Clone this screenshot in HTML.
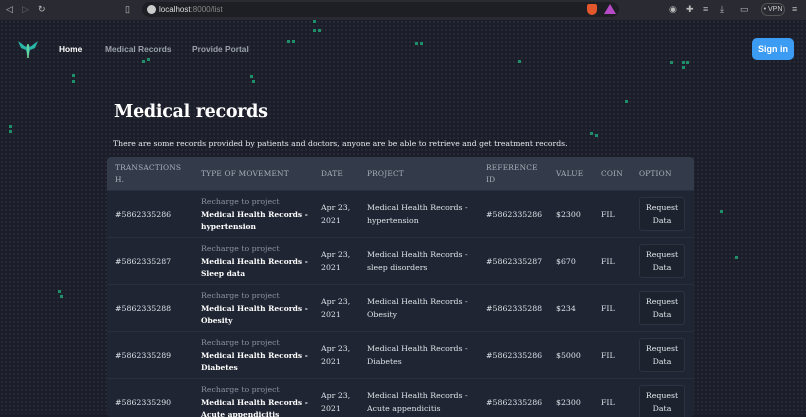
<!DOCTYPE html>
<html><head><meta charset="utf-8"><style>
*{margin:0;padding:0;box-sizing:border-box}
body{width:806px;height:414px;overflow:hidden;background:#1b1e28;font-family:"DejaVu Serif","Liberation Serif",serif;position:relative;color:#d8dce3}
.bg{position:absolute;left:0;top:20px;width:806px;height:394px;background-color:#1b1e29;background-image:radial-gradient(circle,#272b38 1px,transparent 1.3px);background-size:4px 4px}
.bar{position:absolute;left:0;top:0;width:806px;height:20px;background:#2a2b32;font-family:"Liberation Sans",sans-serif}
.url{position:absolute;left:142px;top:2px;width:477px;height:15px;background:#1e1f25;border-radius:8px;color:#ddd;font-size:8px;line-height:15px;padding-left:17px}
.url span{color:#888}
.ic{position:absolute;top:5px;width:9px;height:9px;color:#bbb;font-size:9px;line-height:9px}
.nav{position:absolute;top:44px;font-family:"Liberation Sans",sans-serif;font-size:8.4px;font-weight:bold;color:#9aa0aa}
.signin{position:absolute;left:752px;top:38px;width:42px;height:22px;background:#3c9bf2;border-radius:5px;color:#fff;font-family:"Liberation Sans",sans-serif;font-weight:bold;font-size:9px;line-height:22px;text-align:center}
h1{position:absolute;left:114px;top:102px;font-size:17.5px;font-weight:bold;color:#fff;letter-spacing:-0.3px}
.p{position:absolute;left:113px;top:139px;font-size:7.7px;color:#e6e8ec;white-space:nowrap}
.tbl{position:absolute;left:107px;top:157px;width:587px;height:260px;background:#1f2532;border-radius:4px;overflow:hidden}
.hd{position:absolute;left:0;top:0;width:587px;height:33px;background:#333b4a}
.h{position:absolute;font-size:7.4px;color:#a9b0bb;line-height:12px;letter-spacing:.2px}
.row{position:absolute;left:0;width:587px;height:47px;border-top:1px solid #283040}
.c{position:absolute;font-size:7.8px;color:#dfe3ea;line-height:12.5px;white-space:nowrap}
.g{color:#8c93a0}
.b{font-weight:bold;color:#fff;font-size:7.5px}
.btn{position:absolute;left:532px;top:6px;width:46px;height:34px;border:1px solid #2c3444;border-radius:3px;background:#1c222e;font-size:7.8px;line-height:12.5px;text-align:center;padding-top:4px;color:#e6e9ee}
.dot{position:absolute;width:3px;height:3px;background:#1f8f6a}
</style></head><body>
<div class="bg"></div>
<div class="dot" style="left:313px;top:20px"></div><div class="dot" style="left:313px;top:29px"></div><div class="dot" style="left:318px;top:29px"></div>
<div class="dot" style="left:287px;top:40px"></div><div class="dot" style="left:292px;top:40px"></div>
<div class="dot" style="left:142px;top:60px"></div><div class="dot" style="left:147px;top:58px"></div>
<div class="dot" style="left:415px;top:42px"></div><div class="dot" style="left:420px;top:42px"></div>
<div class="dot" style="left:518px;top:60px"></div><div class="dot" style="left:670px;top:61px"></div><div class="dot" style="left:682px;top:61px"></div><div class="dot" style="left:686px;top:61px"></div><div class="dot" style="left:682px;top:66px"></div>
<div class="dot" style="left:250px;top:75px"></div><div class="dot" style="left:252px;top:80px"></div>
<div class="dot" style="left:72px;top:74px"></div><div class="dot" style="left:72px;top:80px"></div>
<div class="dot" style="left:9px;top:125px"></div><div class="dot" style="left:9px;top:130px"></div>
<div class="dot" style="left:625px;top:100px"></div><div class="dot" style="left:590px;top:132px"></div><div class="dot" style="left:595px;top:134px"></div>
<div class="dot" style="left:58px;top:290px"></div><div class="dot" style="left:60px;top:295px"></div>
<div class="dot" style="left:735px;top:256px"></div><div class="dot" style="left:720px;top:210px"></div>
<div class="bar">
<div class="ic" style="left:6px">◁</div><div class="ic" style="left:22px;color:#666">▷</div><div class="ic" style="left:38px">↻</div>
<div class="ic" style="left:125px">▯</div>
<div class="url">localhost<span>:8000/list</span></div>
<div style="position:absolute;left:147px;top:5px;width:9px;height:9px;border-radius:50%;background:#ccc"></div>
<div style="position:absolute;left:587px;top:4px;width:10px;height:11px;background:#e2572c;border-radius:2px 2px 5px 5px"></div>
<div style="position:absolute;left:604px;top:4px;width:0;height:0;border-left:6px solid transparent;border-right:6px solid transparent;border-bottom:10px solid #b64ac7"></div>
<div class="ic" style="left:669px">◉</div><div class="ic" style="left:686px">✚</div><div class="ic" style="left:703px">≡</div><div class="ic" style="left:720px">⤓</div><div class="ic" style="left:740px">▭</div>
<div style="position:absolute;left:761px;top:3px;width:24px;height:13px;border:1px solid #555;border-radius:7px;font-size:7px;color:#ccc;line-height:11px;text-align:center">• VPN</div>
<div class="ic" style="left:792px">≡</div>
</div>
<svg style="position:absolute;left:17px;top:39px" width="22" height="20" viewBox="0 0 22 20"><path d="M1 2 L9 8 L11 5 L13 8 L21 2 L18 9 L13 11 L11 19 L9 11 L4 9Z" fill="#2ab6a8"/><path d="M11 5 V19" stroke="#7adf9e" stroke-width="1.5"/></svg>
<div class="nav" style="left:59px;color:#fff">Home</div>
<div class="nav" style="left:105px">Medical Records</div>
<div class="nav" style="left:192px">Provide Portal</div>
<div class="signin">Sign in</div>
<h1>Medical records</h1>
<div class="p">There are some records provided by patients and doctors, anyone are be able to retrieve and get treatment records.</div>
<div class="tbl">
<div class="hd">
<div class="h" style="left:8px;top:5px">TRANSACTIONS<br>H.</div>
<div class="h" style="left:94px;top:11px">TYPE OF MOVEMENT</div>
<div class="h" style="left:214px;top:11px">DATE</div>
<div class="h" style="left:260px;top:11px">PROJECT</div>
<div class="h" style="left:379px;top:5px">REFERENCE<br>ID</div>
<div class="h" style="left:449px;top:11px">VALUE</div>
<div class="h" style="left:494px;top:11px">COIN</div>
<div class="h" style="left:532px;top:11px">OPTION</div>
</div>
<div class="row" style="top:33px"><div class="c" style="left:8px;top:18px">#5862335286</div><div class="c" style="left:94px;top:5px"><span class="g">Recharge to project</span><br><span class="b">Medical Health Records -<br>hypertension</span></div><div class="c" style="left:214px;top:11px">Apr 23,<br>2021</div><div class="c" style="left:260px;top:11px">Medical Health Records -<br>hypertension</div><div class="c" style="left:379px;top:18px">#5862335286</div><div class="c" style="left:449px;top:18px">$2300</div><div class="c" style="left:494px;top:18px">FIL</div><div class="btn">Request<br>Data</div></div>
<div class="row" style="top:80px"><div class="c" style="left:8px;top:18px">#5862335287</div><div class="c" style="left:94px;top:5px"><span class="g">Recharge to project</span><br><span class="b">Medical Health Records -<br>Sleep data</span></div><div class="c" style="left:214px;top:11px">Apr 23,<br>2021</div><div class="c" style="left:260px;top:11px">Medical Health Records -<br>sleep disorders</div><div class="c" style="left:379px;top:18px">#5862335287</div><div class="c" style="left:449px;top:18px">$670</div><div class="c" style="left:494px;top:18px">FIL</div><div class="btn">Request<br>Data</div></div>
<div class="row" style="top:127px"><div class="c" style="left:8px;top:18px">#5862335288</div><div class="c" style="left:94px;top:5px"><span class="g">Recharge to project</span><br><span class="b">Medical Health Records -<br>Obesity</span></div><div class="c" style="left:214px;top:11px">Apr 23,<br>2021</div><div class="c" style="left:260px;top:11px">Medical Health Records -<br>Obesity</div><div class="c" style="left:379px;top:18px">#5862335288</div><div class="c" style="left:449px;top:18px">$234</div><div class="c" style="left:494px;top:18px">FIL</div><div class="btn">Request<br>Data</div></div>
<div class="row" style="top:174px"><div class="c" style="left:8px;top:18px">#5862335289</div><div class="c" style="left:94px;top:5px"><span class="g">Recharge to project</span><br><span class="b">Medical Health Records -<br>Diabetes</span></div><div class="c" style="left:214px;top:11px">Apr 23,<br>2021</div><div class="c" style="left:260px;top:11px">Medical Health Records -<br>Diabetes</div><div class="c" style="left:379px;top:18px">#5862335286</div><div class="c" style="left:449px;top:18px">$5000</div><div class="c" style="left:494px;top:18px">FIL</div><div class="btn">Request<br>Data</div></div>
<div class="row" style="top:221px"><div class="c" style="left:8px;top:18px">#5862335290</div><div class="c" style="left:94px;top:5px"><span class="g">Recharge to project</span><br><span class="b">Medical Health Records -<br>Acute appendicitis</span></div><div class="c" style="left:214px;top:11px">Apr 23,<br>2021</div><div class="c" style="left:260px;top:11px">Medical Health Records -<br>Acute appendicitis</div><div class="c" style="left:379px;top:18px">#5862335286</div><div class="c" style="left:449px;top:18px">$2300</div><div class="c" style="left:494px;top:18px">FIL</div><div class="btn">Request<br>Data</div></div>
</div>
</body></html>
